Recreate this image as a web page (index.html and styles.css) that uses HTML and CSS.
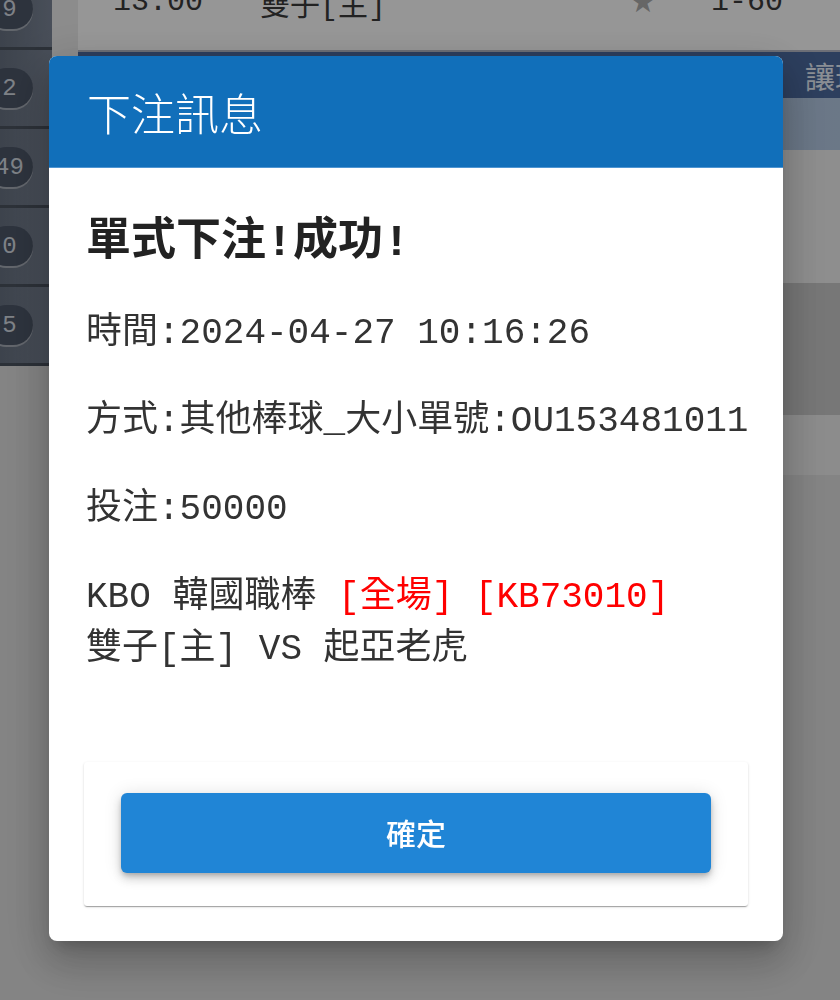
FILE: index.html
```html
<!DOCTYPE html>
<html lang="zh-Hant">
<head>
  <meta charset="UTF-8">
  <meta name="viewport" content="width=device-width, initial-scale=1.0">
  <title>下注訊息</title>
  <link rel="stylesheet" href="styles.css">
</head>
<body>

  <div class="page">
    <aside class="side">
      <div class="side-row"><span class="pill">9</span></div>
      <div class="side-row"><span class="pill">2</span></div>
      <div class="side-row"><span class="pill">49</span></div>
      <div class="side-row"><span class="pill">0</span></div>
      <div class="side-row"><span class="pill">5</span></div>
    </aside>
    <div class="strip"></div>
    <main class="board">
      <div class="game-row">
        <span class="game-time">13:00</span>
        <span class="game-team">雙子[主]</span>
        <span class="game-star">&#9733;</span>
        <span class="game-odds">1-60</span>
      </div>
      <div class="board-head">讓球</div>
      <div class="board-sub"></div>
      <div class="band band-light"></div>
      <div class="band band-dark"></div>
      <div class="band band-thin"></div>
      <div class="band band-rest"></div>
    </main>
  </div>

  <div class="overlay"></div>

  <div class="dialog">
    <div class="dialog-head">下注訊息</div>
    <div class="dialog-body">
      <h3 class="result">單式下注!成功!</h3>
      <p class="line">時間:2024-04-27 10:16:26</p>
      <p class="line">方式:其他棒球_大小單號:OU153481011</p>
      <p class="line">投注:50000</p>
      <p class="line">KBO 韓國職棒 <span class="red">[全場] [KB73010]</span><br>雙子[主] VS 起亞老虎</p>

      <div class="actions">
        <button class="ok-btn">確定</button>
      </div>
    </div>
  </div>

</body>
</html>
```

FILE: styles.css
```css
* {
  box-sizing: border-box;
}

body {
  margin: 0;
  height: 1000px;
  overflow: hidden;
  font-family: "Liberation Mono", "Noto Sans CJK TC", monospace;
  background: #dcdcdc;
  color: #333;
}

/* page behind the dialog (scrolled a little) */
.page {
  display: flex;
  align-items: flex-start;
  margin-top: -29px;
}

.side {
  width: 52px;
  flex: none;
  background: linear-gradient(90deg, #66707f, #7a8495);
}

.side-row {
  height: 79px;
  border-bottom: 3px solid #4a525e;
  display: flex;
  align-items: center;
}

.pill {
  margin-left: -14px;
  width: 47px;
  height: 40px;
  border-radius: 20px;
  background: #4c5667;
  box-shadow: 0 2px 0 #a4aab4;
  color: #d2d8e0;
  font-size: 24px;
  display: flex;
  align-items: center;
  justify-content: center;
}

.strip {
  width: 26px;
  height: 88px;
  flex: none;
  background: #e9e9e9;
}

.board {
  flex: 1;
  min-width: 0;
}

.game-row {
  height: 81px;
  display: flex;
  align-items: center;
  padding: 0 0 18px 35px;
  background: #fbfbfb;
  border-bottom: 2px solid #b6b9c6;
  font-size: 30px;
  color: #3a3a3a;
}

.game-time {
  width: 147px;
}

.game-team {
  width: 355px;
}

.game-star {
  width: 56px;
  text-align: center;
  color: #aaa;
  font-family: "DejaVu Sans", sans-serif;
}

.game-odds {
  margin-left: 40px;
}

.board-head {
  height: 46px;
  display: flex;
  align-items: center;
  padding-left: 727px;
  white-space: nowrap;
  overflow: hidden;
  background: #4b699d;
  color: #e6edf7;
  font-family: Roboto, "Noto Sans CJK TC", sans-serif;
  font-size: 30px;
}

.board-sub {
  height: 52px;
  background: linear-gradient(90deg, #8aa1bf, #b3c8e2);
}

.band-light {
  height: 133px;
  background: #ededed;
}

.band-dark {
  height: 132px;
  background: #c6c6c6;
}

.band-thin {
  height: 60px;
  background: #e9e9e9;
}

.band-rest {
  height: 600px;
  background: #dcdcdc;
}

.overlay {
  position: fixed;
  inset: 0;
  background: rgba(0, 0, 0, 0.4);
}

/* dialog */
.dialog {
  position: fixed;
  top: 56px;
  left: 49px;
  width: 734px;
  background: #fff;
  border-radius: 8px;
  overflow: hidden;
  box-shadow: 0 11px 15px -7px rgba(0, 0, 0, 0.2),
              0 24px 38px 3px rgba(0, 0, 0, 0.14),
              0 9px 46px 8px rgba(0, 0, 0, 0.12);
}

.dialog-head {
  height: 112px;
  display: flex;
  align-items: center;
  padding-left: 38px;
  background: #116fba;
  border-bottom: 1px solid #4f95d2;
  color: #fff;
  font-family: Roboto, "Noto Sans CJK TC", sans-serif;
  font-size: 44px;
  font-weight: 300;
}

.dialog-body {
  padding: 48px 35px 35px;
}

.result {
  margin: 0 0 0 2px;
  font-size: 45px;
  line-height: 56px;
  font-weight: bold;
  color: #222;
}

.line {
  margin: 36px 0 0 2px;
  font-size: 36px;
  line-height: 52px;
  white-space: nowrap;
}

.red {
  color: #f00;
}

.actions {
  margin-top: 86px;
  padding: 31px 37px 33px;
  border-radius: 3px;
  background: #fff;
  box-shadow: 0 2px 1px -1px rgba(0, 0, 0, 0.2),
              0 1px 1px 0 rgba(0, 0, 0, 0.14),
              0 1px 3px 0 rgba(0, 0, 0, 0.12);
}

.ok-btn {
  display: block;
  width: 100%;
  height: 80px;
  border: none;
  border-radius: 6px;
  background: #2085d6;
  color: #fff;
  font-family: Roboto, "Noto Sans CJK TC", sans-serif;
  font-size: 30px;
  font-weight: 500;
  padding-bottom: 4px;
  cursor: pointer;
  box-shadow: 0 3px 5px -1px rgba(0, 0, 0, 0.2),
              0 6px 10px 0 rgba(0, 0, 0, 0.14),
              0 1px 18px 0 rgba(0, 0, 0, 0.12);
}
```
